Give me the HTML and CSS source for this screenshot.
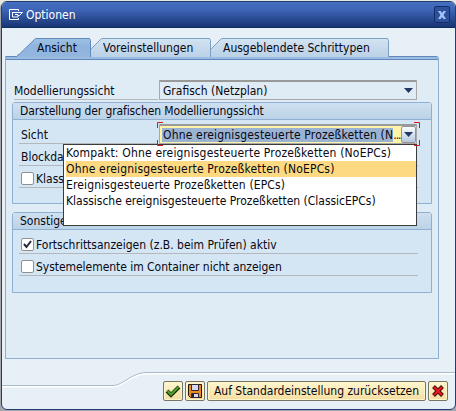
FILE: index.html
```html
<!DOCTYPE html>
<html lang="de">
<head>
<meta charset="utf-8">
<title>Optionen</title>
<link rel="stylesheet" href="styles.css">
</head>
<body>
<main class="window">
  <header class="titlebar">
    <svg class="exit" width="16" height="13" viewBox="0 0 16 13"><path d="M10.500 3V1.500H1.500v10H10.500V10M4.500 4.500H14.500L11.500 7.500H10M4.500 4v5H10V7M7 6.500h3" fill="none" stroke="#fff"/></svg>
    <span class="title">Optionen</span>
    <button class="close" aria-label="Schließen"><svg width="10" height="10" viewBox="0 0 10 10"><path d="M1 1h2.500L5 3l1.500-2H9L6.500 5 9 9H6.500L5 7 3.500 9H1L3.500 5z" fill="#a4c4ff"/></svg></button>
  </header>
  <nav class="tabs">
    <svg class="tabshape" width="385" height="19" viewBox="0 0 385 19">
      <defs>
        <linearGradient id="t" x2="0" y2="1"><stop stop-color="#d3e3f1"/><stop offset="1" stop-color="#b9d0e6"/></linearGradient>
        <linearGradient id="a" x2="0" y2="1"><stop stop-color="#9fc2e3"/><stop offset=".4" stop-color="#8fb4de"/><stop offset="1" stop-color="#93b7df"/></linearGradient>
      </defs>
      <path d="M193.500 20V11.500L204.500.500H370.500l1 2V20z" fill="url(#t)" stroke="#7d9fc4"/>
      <path d="M73.500 20V11.500L84.500.500H192.500l1 2V20z" fill="url(#t)" stroke="#7d9fc4"/>
      <path d="M-2 20V18.500L2 16.500 18.500.500H72.500l1 2V20z" fill="url(#a)" stroke="#5f8abb"/>
    </svg>
    <span class="tab one">Ansicht</span><span class="tab two">Voreinstellungen</span><span class="tab three">Ausgeblendete Schrittypen</span>
  </nav>
  <section class="panel">
    <div class="row first"><span class="label modeling">Modellierungssicht</span><div class="combo"><span>Grafisch (Netzplan)</span><i class="arrow"></i></div></div>
    <section class="group g1">
      <h2 class="display">Darstellung der grafischen Modellierungssicht</h2>
      <div class="row sight"><span class="label">Sicht</span>
        <div class="combo focus"><span class="selected">Ohne ereignisgesteuerte Prozeßketten (N</span><span class="dots">...</span><span class="drop"><i class="arrow"></i></span>
          <svg class="corners" width="263" height="24" viewBox="0 0 263 24"><path d="M.500 6V.500H6M.500 18v5.500H6M257 .500h5.500V6M262.500 18v5.500H257"/></svg>
          <ul class="menu"><li class="m1">Kompakt: Ohne ereignisgesteuerte Prozeßketten (NoEPCs)</li><li class="active">Ohne ereignisgesteuerte Prozeßketten (NoEPCs)</li><li class="m3">Ereignisgesteuerte Prozeßketten (EPCs)</li><li class="m4">Klassische ereignisgesteuerte Prozeßketten (ClassicEPCs)</li></ul>
        </div>
      </div>
      <div class="line block">Blockda</div>
      <div class="line check"><i class="box"></i>Klassi</div>
    </section>
    <section class="group g2">
      <h2>Sonstige</h2>
      <div class="line check progress"><i class="box"><svg width="11" height="11" viewBox="0 0 11 11"><path d="M2 5l2.500 3L9 2" fill="none" stroke="#272742" stroke-width="2"/></svg></i><span>Fortschrittsanzeigen (z.B. beim Prüfen) aktiv</span></div>
      <div class="line check"><i class="box"></i><span class="system">Systemelemente im Container nicht anzeigen</span></div>
    </section>
  </section>
  <footer>
    <svg class="curve" width="453" height="18" viewBox="0 0 453 18"><path d="M0 15.500H111C121 15.500 130 2.500 144 2.500H453" fill="none" stroke="#fff" stroke-width="2"/><path d="M0 14.500H111C121 14.500 130 1.500 144 1.500H453" fill="none" stroke="#abb9cc"/></svg>
    <div class="buttons">
      <button class="icon" aria-label="Übernehmen"><svg width="16" height="14" viewBox="0 0 16 14"><path d="M2 7l4 4L14 3" fill="none" stroke="#17330b" stroke-width="4"/><path d="M2.500 7L6 10.500l7.500-7.500" fill="none" stroke="#55a329" stroke-width="2"/></svg></button>
      <button class="icon" aria-label="Sichern"><svg width="16" height="16" viewBox="0 0 16 16"><path d="M1.500 1.500h13v13H3.500l-2-2z" fill="#e98b20" stroke="#21160e"/><path d="M4.500 1.500h7v6h-7zM4.500 10.500h7v4h-7z" fill="#d9d9ed" stroke="#33283a"/><path d="M6 11v3" stroke="#222" stroke-width="2"/></svg></button>
      <button class="reset">Auf Standardeinstellung zurücksetzen</button>
      <button class="icon" aria-label="Abbrechen"><svg width="12" height="12" viewBox="0 0 12 12"><path d="M1.500 1.500l9 9M10.500 1.500l-9 9" stroke="#3d0908" stroke-width="4"/><path d="M2 2l8 8M10 2l-8 8" stroke="#ee1720" stroke-width="2.200"/></svg></button>
    </div>
  </footer>
</main>
</body>
</html>
```
FILE: styles.css
```css
* { box-sizing: border-box; }
body { margin: 0; padding: 1px 0 0 1px; width: 456px; height: 411px; overflow: hidden; background: linear-gradient(#e5e6dc 0 4px, #a5a7ac 8px); font: 12px/16px "DejaVu Sans Condensed", "DejaVu Sans", sans-serif; font-stretch: condensed; color: #080812; }
button { font: inherit; padding: 0; color: inherit; }
svg { display: block; flex: none; }
.window { width: 455px; height: 409px; border: 1px solid #243c74; border-radius: 6px; background: #e8f0f7; overflow: hidden; }
.titlebar { height: 26px; display: flex; align-items: center; background: linear-gradient(#456fc0, #3e65b8 30%, #183574); color: #fff; padding: 0 5px 0 6px; border-bottom: 1px solid #142c60; }
.title { margin-left: 2px; flex: 1; }
.close { width: 16px; height: 17px; border: 1px solid #142d68; background: #2e519c; border-radius: 2px; display: grid; place-items: center; }
.tabs { height: 18px; margin: 10px 0 0 15px; width: 385px; display: grid; grid-template-columns: 72px 120px 1fr; grid-template-rows: 18px; }
.tabshape { grid-area: 1 / 1 / 2 / 4; overflow: hidden; height: 19px; }
.tab { grid-row: 1; padding-top: 2px; z-index: 1; white-space: nowrap; }
.one { grid-column: 1; padding-left: 20px; } .two { grid-column: 2; padding-left: 14px; } .three { grid-column: 3; padding-left: 14px; }
.panel { width: 434px; height: 303px; margin-left: 3px; padding: 24px 0 0 6px; border: 1px solid #8eb0d2; border-top: 0; background: linear-gradient(#6089bb 0 1px, #9bbce0 1px 3px, #6089bb 3px 4px, #dfebf5 4px); border-radius: 0 3px 0 0; }
.row { display: flex; height: 20px; }
.label { height: 20px; border-bottom: 1px solid #b4b8bc; padding-top: 3px; width: 144px; margin-left: 2px; margin-right: 1px; white-space: nowrap; }
.modeling { letter-spacing: -.05px; }
.combo { width: 258px; height: 20px; border: 1px solid #a8a8a8; border-top: 2px solid #999; border-radius: 1px; padding: 0 3px; position: relative; display: flex; align-items: center; white-space: nowrap; }
.arrow { width: 9px; height: 5px; background: #233865; clip-path: polygon(0 0, 100% 0, 50% 100%); margin-left: auto; }
.group { width: 420px; border: 1px solid #8eb0d2; border-radius: 3px 3px 0 0; background: #d4e5f3; padding-left: 6px; }
.g1 { height: 102px; margin-top: 2px; } .g2 { height: 81px; margin-top: 8px; }
h2 { margin: 0 0 0 -6px; height: 17px; padding-left: 7px; border-bottom: 1px solid #8eb0d2; background: linear-gradient(#cfe0f0, #bbd2e7); font: inherit; line-height: 16px; white-space: nowrap; }
.display { letter-spacing: -.11px; }
.sight { margin-top: 4px; }
.sight .label { width: 139px; margin-left: 0; padding-left: 2px; }
.focus { background: #fff3a8; padding: 0; margin-left: 0; }
.selected { width: 232px; height: 14px; background: #9bb3d3; line-height: 14px; margin-left: 2px; padding-left: 1px; letter-spacing: .17px; }
.dots { width: 8px; overflow: visible; letter-spacing: -1px; }
.drop { margin-left: auto; width: 15px; height: 17px; border: 1px solid #949494; background: linear-gradient(#fafcff, #b5c8e1); display: grid; place-items: center; border-radius: 2px; }
.drop .arrow { margin: 0; }
.corners { position: absolute; left: -3px; top: -4px; fill: none; stroke: #dc1616; z-index: 3; }
.menu { position: absolute; left: -97px; top: 18px; z-index: 2; margin: 0; padding: 0 0 0 2px; width: 354px; height: 82px; border: 1px solid #3b3b3b; background: #fff; list-style: none; }
.menu li { height: 16px; line-height: 16px; }
.menu .active { background: #fdda81; letter-spacing: .17px; }
.m1 { letter-spacing: .18px; } .m3 { letter-spacing: .13px; } .m4 { letter-spacing: -.02px; }
.line { width: 399px; height: 22px; border-bottom: 1px solid #b4b8bc; padding: 5px 0 0 2px; white-space: nowrap; }
.check { display: flex; gap: 2px; line-height: 14px; padding-top: 6px; }
.box { width: 13px; height: 13px; border: 1px solid #909090; border-radius: 2px; background: #fff; }
.progress { height: 24px; padding-top: 8px; }
.system { letter-spacing: -.04px; }
footer { margin-top: 12px; height: 38px; }
.curve { height: 18px; }
.buttons { display: flex; gap: 2px; margin: -8px 0 0 161px; position: relative; }
.buttons button { height: 20px; border: 1px solid #777568; border-radius: 2px; background: linear-gradient(#fff7cf, #f6dda0); display: grid; place-items: center; white-space: nowrap; box-shadow: inset 0 0 0 1px #fff5c8; }
.buttons .icon { width: 20px; } .buttons .reset { width: 219px; }
```
